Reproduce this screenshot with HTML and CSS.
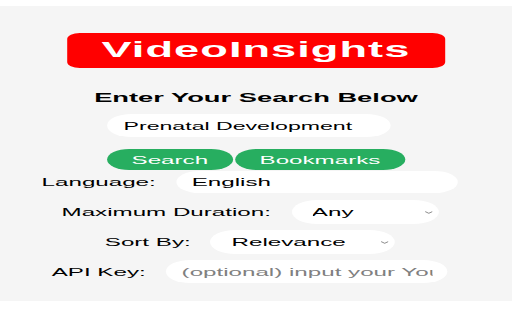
FILE: index.html
```html
<!DOCTYPE html>
<html lang="en">
<head>
    <meta charset="UTF-8">
    <meta name="viewport" content="width=device-width, initial-scale=1.0">
    <title>VideoInsights</title>
    <link rel="stylesheet" href="styles.css">
</head>
<body>

<div class="stage">
  <div class="popup">
    <h1 class="brand">VideoInsights</h1>
    <h2 class="prompt">Enter Your Search Below</h2>

    <input type="text" class="pill search-box" id="query" value="Prenatal Development">

    <div class="actions">
      <button class="btn" id="search">Search</button>
      <button class="btn" id="bookmarks">Bookmarks</button>
    </div>

    <div class="field row-language">
      <label for="language">Language:</label>
      <input type="text" class="pill wide" id="language" value="English">
    </div>

    <div class="field row-select">
      <label for="duration">Maximum Duration:</label>
      <span class="select-wrap duration">
        <select id="duration" class="pill-select">
          <option>Any</option>
        </select>
        <svg class="chevron" viewBox="0 0 9 6"><path d="M1 1.2 L4.5 4.6 L8 1.2"/></svg>
      </span>
    </div>

    <div class="field row-select">
      <label for="sort">Sort By:</label>
      <span class="select-wrap sort">
        <select id="sort" class="pill-select">
          <option>Relevance</option>
        </select>
        <svg class="chevron" viewBox="0 0 9 6"><path d="M1 1.2 L4.5 4.6 L8 1.2"/></svg>
      </span>
    </div>

    <div class="field row-api">
      <label for="apikey">API Key:</label>
      <input type="text" class="pill wide" id="apikey" placeholder="(optional) input your YouTube API key">
    </div>
  </div>
</div>

</body>
</html>
```

FILE: styles.css
```css
    body {
        margin: 0;
        background-color: #fff;
        font-family: "Liberation Sans", Arial, sans-serif;
        color: #000;
    }

    .stage {
        margin-top: 6px;
        height: 295px;
        background-color: #f5f5f5; /* light grey panel */
        overflow: hidden;
    }

    /* popup is laid out narrow, then stretched sideways like the shot */
    .popup {
        width: 243.8px;
        transform: scaleX(2.1);
        transform-origin: 0 0;
        display: flex;
        flex-direction: column;
        align-items: center;
        padding-top: 27px;
    }

    .brand {
        margin: 0;
        width: 180px;
        height: 35px;
        line-height: 35px;
        background-color: #ff0000;
        color: #fff;
        border-radius: 6px;
        text-align: center;
        font-size: 21.5px;
        font-weight: bold;
        letter-spacing: 0.5px;
    }

    .prompt {
        margin: 22px 0 0;
        font-size: 13px;
        line-height: 16px;
        font-weight: bold;
    }

    .pill {
        box-sizing: border-box;
        border: none;
        outline: none;
        background-color: #fff;
        border-radius: 999px;
        padding: 0 7.6px;
        font-family: inherit;
        color: #000;
    }

    .pill::placeholder {
        color: #808080;
    }

    .search-box {
        margin: 8px 7px 0 0;
        width: 134.3px;
        height: 23px;
        font-size: 11px;
    }

    .actions {
        margin-top: 12px;
        display: flex;
        gap: 0.5px;
    }

    .btn {
        height: 21px;
        padding: 0 12px;
        border: none;
        border-radius: 999px;
        background-color: #27ae60; /* green buttons */
        color: #fff;
        font-family: inherit;
        font-size: 11.5px;
        cursor: pointer;
    }

    .field {
        display: flex;
        align-items: center;
        gap: 9.5px;
        padding-right: 6px;
        font-size: 11.5px;
    }

    .row-language {
        margin-top: 1px;
        height: 22px;
    }

    .row-select {
        margin-top: 7px;
        height: 24px;
    }

    .row-select + .row-select {
        margin-top: 6px;
    }

    .row-api {
        margin-top: 6px;
        height: 23px;
    }

    .wide {
        width: 134.3px;
        height: 100%;
        font-size: 11.5px;
    }

    .select-wrap {
        position: relative;
        display: block;
        height: 24px;
    }

    .duration { width: 70px; }
    .sort { width: 87.6px; }

    .pill-select {
        appearance: none;
        -webkit-appearance: none;
        width: 100%;
        height: 100%;
        border: none;
        border-radius: 999px;
        background-color: #fff;
        padding: 0 0 0 10px;
        font-family: inherit;
        font-size: 11.5px;
        color: #000;
    }

    .chevron {
        position: absolute;
        right: 2.6px;
        top: 10.5px;
        width: 4.4px;
        height: 3px;
        fill: none;
        stroke: #555;
        stroke-width: 0.9;
        pointer-events: none;
    }
```
